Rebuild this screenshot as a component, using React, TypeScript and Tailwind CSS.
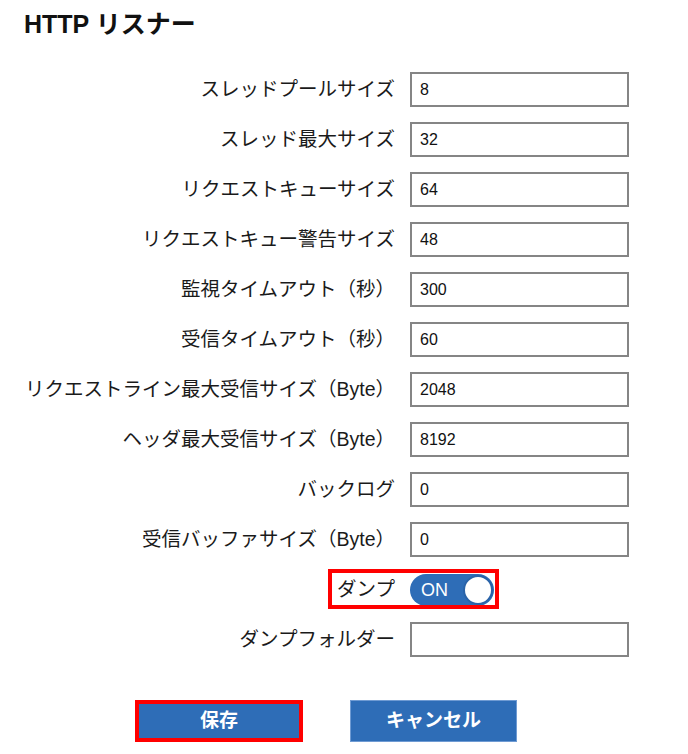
const fields: { label: string; value: string }[] = [
  { label: 'スレッドプールサイズ', value: '8' },
  { label: 'スレッド最大サイズ', value: '32' },
  { label: 'リクエストキューサイズ', value: '64' },
  { label: 'リクエストキュー警告サイズ', value: '48' },
  { label: '監視タイムアウト（秒）', value: '300' },
  { label: '受信タイムアウト（秒）', value: '60' },
  { label: 'リクエストライン最大受信サイズ（Byte）', value: '2048' },
  { label: 'ヘッダ最大受信サイズ（Byte）', value: '8192' },
  { label: 'バックログ', value: '0' },
  { label: '受信バッファサイズ（Byte）', value: '0' },
];

const font = { fontFamily: '"Liberation Sans", "Noto Sans CJK JP", sans-serif' };

function Field({ label, value }: { label: string; value: string }) {
  return (
    <>
      <label className="text-right text-[19.5px] leading-[35px] text-[#1a1a1a] whitespace-nowrap">{label}</label>
      <input
        readOnly
        value={value}
        className="h-[35px] w-[219px] border-2 border-[#858585] bg-white pl-[8px] text-[16px] text-[#111] outline-none"
      />
    </>
  );
}

export default function App() {
  return (
    <div className="h-[754px] w-[688px] bg-white" style={font}>
      <h1 className="pl-[24px] pt-[7px] text-[25px] font-bold leading-[35px] text-[#111]">HTTP リスナー</h1>

      <div className="mt-[30px] grid grid-cols-[395px_219px] gap-x-[15px] gap-y-[15px]">
        {fields.map((f) => (
          <Field key={f.label} label={f.label} value={f.value} />
        ))}

        {/* Dump toggle */}
        <div className="relative col-span-2 grid h-[35px] grid-cols-[395px_219px] gap-x-[15px]">
          <span className="text-right text-[19.5px] leading-[35px] text-[#1a1a1a]">ダンプ</span>
          <div className="flex items-center">
            <div className="flex h-[32px] w-[84px] items-center justify-between rounded-full bg-[#2e6db7] pl-[11px] pr-[1px]">
              <span className="text-[18px] leading-none text-white">ON</span>
              <span className="h-[30px] w-[30px] rounded-full border-2 border-[#2a63a8] bg-white" />
            </div>
          </div>
          <div className="pointer-events-none absolute left-[328px] top-[-3px] h-[40px] w-[171px] border-[4px] border-[#ff0000]" />
        </div>

        <Field label="ダンプフォルダー" value="" />
      </div>

      <div className="mt-[43px] flex gap-[47px] pl-[135px]">
        <button className="h-[42px] w-[168px] border-[4px] border-[#ff0000] bg-[#2e6db7] text-[19px] font-bold text-white">
          保存
        </button>
        <button className="h-[42px] w-[167px] border border-[#6f9bd3] bg-[#2e6db7] text-[19px] font-bold text-white">
          キャンセル
        </button>
      </div>
    </div>
  );
}
